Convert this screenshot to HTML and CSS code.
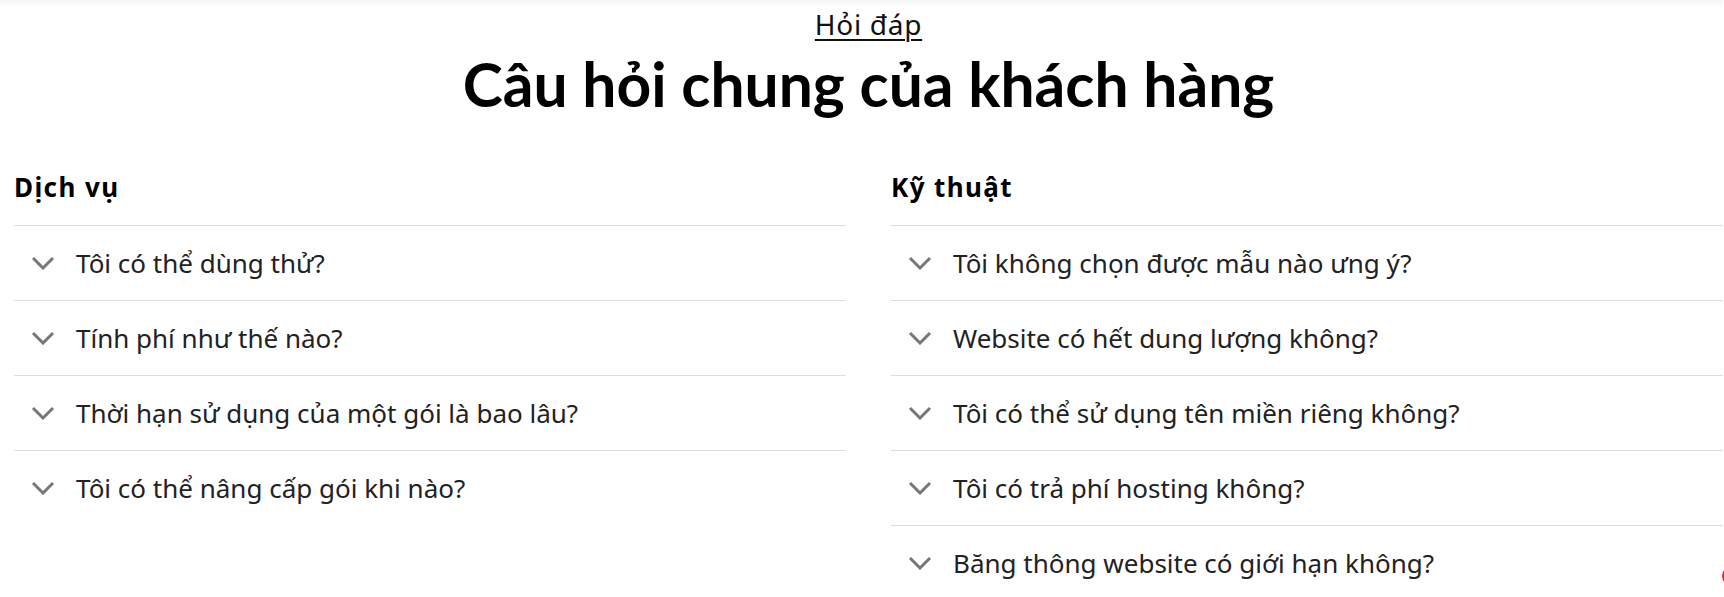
FILE: index.html
```html
<!DOCTYPE html>
<html lang="vi">
<head>
<meta charset="utf-8">
<title>Hỏi đáp</title>
<link rel="stylesheet" href="styles.css">
</head>
<body>
<section class="faq">
  <div class="intro">
    <a class="eyebrow" href="#">Hỏi đáp</a>
    <h1 class="title">Câu hỏi chung của khách hàng</h1>
  </div>
  <div class="columns">
    <div class="col">
      <h2 class="col-title">Dịch vụ</h2>
      <ul class="list">
        <li class="item"><svg class="chev" viewBox="0 0 24 14"><path d="M2 2 L12 12 L22 2"/></svg><span>Tôi có thể dùng thử?</span></li>
        <li class="item"><svg class="chev" viewBox="0 0 24 14"><path d="M2 2 L12 12 L22 2"/></svg><span>Tính phí như thế nào?</span></li>
        <li class="item"><svg class="chev" viewBox="0 0 24 14"><path d="M2 2 L12 12 L22 2"/></svg><span>Thời hạn sử dụng của một gói là bao lâu?</span></li>
        <li class="item"><svg class="chev" viewBox="0 0 24 14"><path d="M2 2 L12 12 L22 2"/></svg><span>Tôi có thể nâng cấp gói khi nào?</span></li>
      </ul>
    </div>
    <div class="col">
      <h2 class="col-title">Kỹ thuật</h2>
      <ul class="list">
        <li class="item"><svg class="chev" viewBox="0 0 24 14"><path d="M2 2 L12 12 L22 2"/></svg><span>Tôi không chọn được mẫu nào ưng ý?</span></li>
        <li class="item"><svg class="chev" viewBox="0 0 24 14"><path d="M2 2 L12 12 L22 2"/></svg><span>Website có hết dung lượng không?</span></li>
        <li class="item"><svg class="chev" viewBox="0 0 24 14"><path d="M2 2 L12 12 L22 2"/></svg><span>Tôi có thể sử dụng tên miền riêng không?</span></li>
        <li class="item"><svg class="chev" viewBox="0 0 24 14"><path d="M2 2 L12 12 L22 2"/></svg><span>Tôi có trả phí hosting không?</span></li>
        <li class="item"><svg class="chev" viewBox="0 0 24 14"><path d="M2 2 L12 12 L22 2"/></svg><span>Băng thông website có giới hạn không?</span></li>
      </ul>
    </div>
  </div>
</section>
<div class="chat-btn"></div>
</body>
</html>
```
FILE: styles.css
```css
html, body {
  margin: 0;
  padding: 0;
  background: #fff;
  overflow: hidden;
}
body {
  font-family: "Noto Sans", "Lato", sans-serif;
  color: #111;
}
.faq {
  width: 1709px;
  padding-left: 14px;
  box-shadow: inset 0 6px 6px -4px rgba(0, 0, 0, 0.06);
}
.intro {
  text-align: center;
  padding-top: 7px;
}
.eyebrow {
  display: inline-block;
  font-size: 28px;
  line-height: 34px;
  letter-spacing: 0.7px;
  color: #111;
  text-decoration: underline;
  text-underline-offset: 4px;
  text-decoration-thickness: 2px;
}
.title {
  margin: 8px 0 0;
  font-family: "Lato", "Noto Sans", sans-serif;
  font-size: 60.5px;
  line-height: 70px;
  font-weight: 700;
  color: #000;
}
.columns {
  display: grid;
  grid-template-columns: 832px 832px;
  column-gap: 45px;
  margin-top: 52px;
}
.col-title {
  margin: 0;
  font-size: 26px;
  line-height: 32px;
  letter-spacing: 1.4px;
  font-weight: 700;
  color: #000;
  padding-bottom: 22px;
}
.list {
  list-style: none;
  margin: 0;
  padding: 0;
}
.item {
  display: flex;
  align-items: center;
  height: 74px;
  border-top: 1px solid #dedede;
  padding-left: 17px;
  gap: 21px;
  font-size: 26px;
  color: #222;
}
.chev {
  width: 24px;
  height: 14px;
  flex: none;
}
.chev path {
  fill: none;
  stroke: #777;
  stroke-width: 3;
}
.chat-btn {
  position: fixed;
  left: 1722px;
  top: 566px;
  width: 20px;
  height: 20px;
  border-radius: 50%;
  background: #e4283a;
}
```
